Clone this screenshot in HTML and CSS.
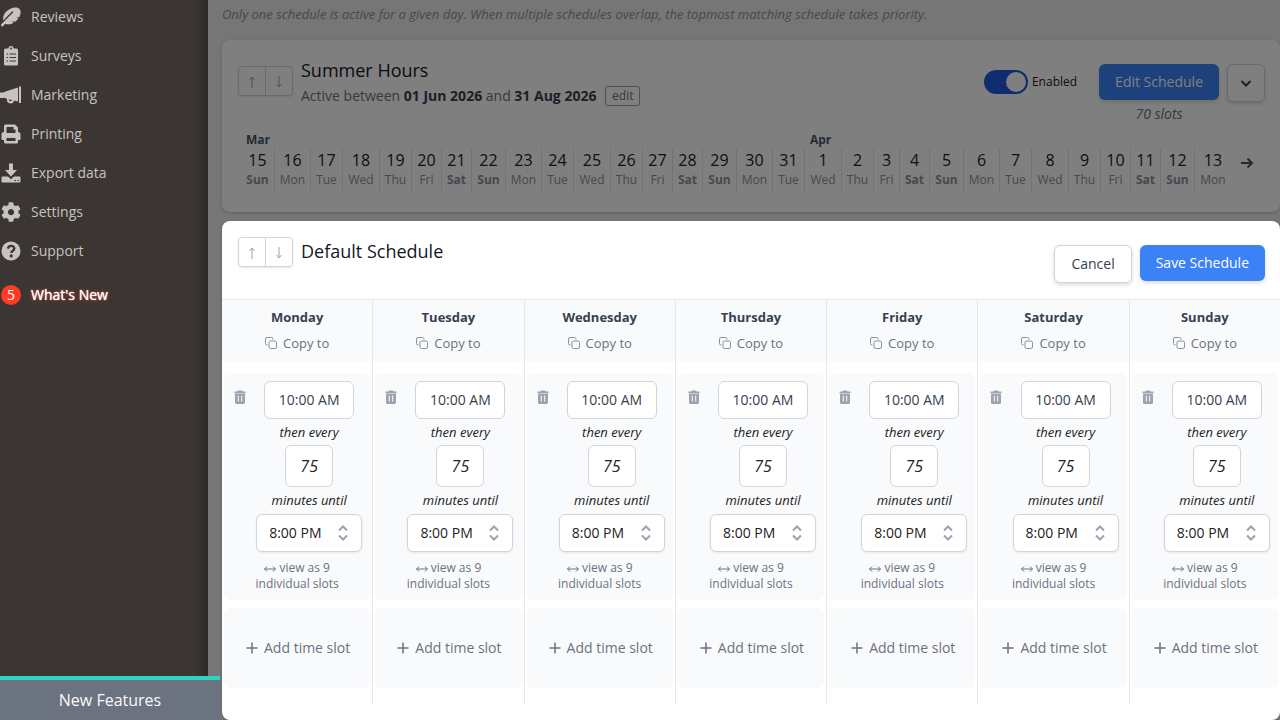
FILE: index.html
```html
<!DOCTYPE html>
<html lang="en">
<head>
  <meta charset="UTF-8" />
  <meta name="viewport" content="width=device-width, initial-scale=1.0"/>
  <title>Schedules</title>
  <link rel="stylesheet" href="styles.css">
</head>
<body>
  <aside class="sidebar">
    <nav class="menu">
      <a href="#">
        <svg viewBox="0 0 512 512"><path d="M467 44C425 2 363 8 311 19 235 35 150 93 101 156 61 208 48 277 55 345L283 117c8-8 18-8 25 0s7 17 0 24L14 436c-10 10-14 20-14 32 0 27 30 40 48 22l62-62c62 20 125 20 177-8l40-28-68-22h121c26-26 49-55 66-86l-74-22h96c12-28 22-57 28-84 12-52 13-92-29-134z"/></svg>
        <span>Reviews</span>
      </a>
      <a href="#">
        <svg viewBox="0 0 20 20"><path fill-rule="evenodd" d="M4.500 2.500h3a2.500 2.500 0 0 1 5 0h3A1.500 1.500 0 0 1 17 4v14a1.500 1.500 0 0 1-1.500 1.500h-11A1.500 1.500 0 0 1 3 18V4a1.500 1.500 0 0 1 1.500-1.500zM10 1.500a1 1 0 1 0 0 2 1 1 0 0 0 0-2zM5.500 7.500v1h1.500v-1zM8.500 7.500v1H15v-1zM5.500 11v1h1.500v-1zM8.500 11v1H15v-1zM5.500 14.500v1h1.500v-1zM8.500 14.500v1H15v-1z"/></svg>
        <span>Surveys</span>
      </a>
      <a href="#">
        <svg class="wide" viewBox="0 0 22 20"><path fill-rule="evenodd" d="M19 1.500h2V18h-2zM18 2.500v14l-4-1A3.400 3.400 0 0 1 7 14L4 12.500V13H0V7.500h4V7zM8.800 14.300a1.700 1.700 0 0 0 3.300.700z"/></svg>
        <span>Marketing</span>
      </a>
      <a href="#">
        <svg viewBox="0 0 20 20"><path fill-rule="evenodd" d="M3 8V2a1.500 1.500 0 0 1 1.500-1.500h9.500L17 3.500V8a2.500 2.500 0 0 1 2.500 2.500v4.500a1 1 0 0 1-1 1H17v2a1.500 1.500 0 0 1-1.500 1.500h-11A1.500 1.500 0 0 1 3 18v-2H1.500a1 1 0 0 1-1-1v-4.500A2.500 2.500 0 0 1 3 8zM5.500 3v6h9V5.500h-2V3zM5.500 14v3h9v-3z"/></svg>
        <span>Printing</span>
      </a>
      <a href="#">
        <svg viewBox="0 0 20 20"><path fill-rule="evenodd" d="M8 .500h4V7h4l-6 6.500L4 7h4zM1.500 13.500H7l3 2.700 3-2.700h5.500a1 1 0 0 1 1 1v4a1 1 0 0 1-1 1h-17a1 1 0 0 1-1-1v-4a1 1 0 0 1 1-1zM13.500 17v1H15v-1zM16.500 17v1H18v-1z"/></svg>
        <span>Export data</span>
      </a>
      <a href="#">
        <svg viewBox="0 0 512 512"><path d="M487.400 315.700l-42.600-24.600c4.300-23.200 4.300-47 0-70.200l42.600-24.600c4.900-2.800 7.100-8.600 5.500-14-11.100-35.600-30-67.800-54.700-94.600-3.800-4.100-10-5.100-14.800-2.300L380.800 110c-17.900-15.400-38.500-27.300-60.800-35.100V25.800c0-5.600-3.900-10.500-9.400-11.700-36.700-8.200-74.300-7.800-109.200 0-5.500 1.200-9.400 6.100-9.400 11.700V75c-22.200 7.900-42.800 19.800-60.800 35.100L88.700 85.500c-4.900-2.800-11-1.900-14.800 2.300-24.700 26.700-43.600 58.900-54.700 94.600-1.700 5.400.600 11.200 5.500 14L67.300 221c-4.300 23.200-4.300 47 0 70.200l-42.600 24.600c-4.900 2.800-7.100 8.600-5.500 14 11.100 35.600 30 67.800 54.700 94.600 3.800 4.100 10 5.100 14.800 2.300l42.600-24.600c17.900 15.400 38.500 27.300 60.800 35.100v49.200c0 5.600 3.900 10.500 9.400 11.700 36.700 8.200 74.300 7.800 109.200 0 5.500-1.200 9.400-6.100 9.400-11.700v-49.200c22.200-7.900 42.800-19.800 60.800-35.100l42.600 24.600c4.900 2.800 11 1.900 14.800-2.300 24.700-26.700 43.600-58.900 54.700-94.600 1.500-5.500-.700-11.300-5.600-14.100zM256 336c-44.100 0-80-35.900-80-80s35.900-80 80-80 80 35.900 80 80-35.900 80-80 80z"/></svg>
        <span>Settings</span>
      </a>
      <a href="#">
        <svg viewBox="0 0 20 20"><circle cx="10" cy="10" r="9.500"/><path class="mark" d="M6.800 7.600C7.300 5.800 8.500 4.900 10.200 4.900c1.800 0 3.100 1.100 3.100 2.600 0 2.300-3 2.100-3 4.400"/><circle class="dot" cx="10.200" cy="14.900" r="1.600"/></svg>
        <span>Support</span>
      </a>
      <a href="#" class="whats-new">
        <b class="count">5</b>
        <span>What's New</span>
      </a>
    </nav>
    <button class="new-features">New Features</button>
  </aside>

  <main>
    <p class="intro">Only one schedule is active for a given day. When multiple schedules overlap, the topmost matching schedule takes priority.</p>

    <section class="card summer">
      <header class="card-head">
        <div class="order">
          <button aria-label="Move up"><svg viewBox="0 0 6 12"><path d="M3 12V1M.500 4L3 1l2.500 3"/></svg></button>
          <button aria-label="Move down"><svg viewBox="0 0 6 12"><path d="M3 0v11M.500 8L3 11l2.500-3"/></svg></button>
        </div>
        <div class="heading">
          <h2>Summer Hours</h2>
          <p>Active between <b>01 Jun 2026</b> and <b>31 Aug 2026</b> <button class="edit">edit</button></p>
        </div>
        <label class="toggle"><input type="checkbox" checked> Enabled</label>
        <div class="edit-schedule">
          <button class="btn primary">Edit Schedule</button>
          <em>70 slots</em>
        </div>
        <button class="btn more" aria-label="More">
          <svg viewBox="0 0 12 12"><path d="M1.500 4L6 8.500 10.500 4"/></svg>
        </button>
      </header>
      <div class="calendar">
        <div class="months" id="months"></div>
        <button class="next" aria-label="Next days">
          <svg viewBox="0 0 14 12"><path d="M1 6h11M7.500 1.500L12 6l-4.500 4.500"/></svg>
        </button>
      </div>
    </section>

    <div class="backdrop"></div>

    <section class="card default">
      <header class="card-head">
        <div class="order">
          <button aria-label="Move up"><svg viewBox="0 0 6 12"><path d="M3 12V1M.500 4L3 1l2.500 3"/></svg></button>
          <button aria-label="Move down"><svg viewBox="0 0 6 12"><path d="M3 0v11M.500 8L3 11l2.500-3"/></svg></button>
        </div>
        <div class="heading">
          <h2>Default Schedule</h2>
        </div>
        <button class="btn">Cancel</button>
        <button class="btn primary">Save Schedule</button>
      </header>
      <div class="week" id="week"></div>
    </section>
  </main>

  <script>
    const weekdays = ["Sun", "Mon", "Tue", "Wed", "Thu", "Fri", "Sat"];
    const months = [
      { name: "Mar", first: 15, last: 31, weekday: 0 },
      { name: "Apr", first: 1, last: 13, weekday: 3 }
    ];

    months.forEach(month => {
      let days = "";
      for (let d = month.first; d <= month.last; d++) {
        const name = weekdays[(month.weekday + d - month.first) % 7];
        const short = d < 10 ? " short" : "";
        days += `<div class="date ${name.toLowerCase()}${short}">${d}<small>${name}</small></div>`;
      }
      document.getElementById("months").innerHTML += `<div class="month"><h4>${month.name}</h4><div class="dates">${days}</div></div>`;
    });

    const columns = ["Monday", "Tuesday", "Wednesday", "Thursday", "Friday", "Saturday", "Sunday"];

    document.getElementById("week").innerHTML = columns.map(day => `
      <div class="day">
        <div class="day-head">
          <h3>${day}</h3>
          <button class="copy">
            <svg viewBox="0 0 12 12"><rect x="4" y="4" width="7.500" height="7.500" rx="1.500"/><path d="M2.500 8H2A1.500 1.500 0 0 1 .500 6.500V2A1.500 1.500 0 0 1 2 .500h4.500A1.500 1.500 0 0 1 8 2v.500"/></svg>
            Copy to
          </button>
        </div>
        <div class="slot">
          <div class="slot-row">
            <button class="delete" aria-label="Delete">
              <svg viewBox="0 0 12 14"><path fill-rule="evenodd" d="M4 .500h4l.500 1H11.500V3.500H.500V1.500h3zM1 4h10v8.500a1.500 1.500 0 0 1-1.500 1.500h-7A1.500 1.500 0 0 1 1 12.500zM3.800 5.500v6h1v-6zM7.200 5.500v6h1v-6z"/></svg>
            </button>
            <div class="times">
              <input class="start" type="text" value="10:00 AM" aria-label="${day} start">
              <label for="every-${day}">then every</label>
              <input class="every" id="every-${day}" type="text" value="75">
              <label for="until-${day}">minutes until</label>
              <div class="until">
                <select id="until-${day}"><option>8:00 PM</option></select>
                <svg viewBox="0 0 10 16"><path d="M1 5.500l4-4 4 4M1 10.500l4 4 4-4"/></svg>
              </div>
            </div>
          </div>
          <button class="view-as"><svg viewBox="0 0 12 6"><path d="M.500 3h11M3 .500L.500 3 3 5.500M9 .500L11.500 3 9 5.500"/></svg> view as 9 individual slots</button>
        </div>
        <button class="add">
          <svg viewBox="0 0 12 12"><path d="M6 .500v11M.500 6h11"/></svg>
          Add time slot
        </button>
      </div>`).join("");
  </script>
</body>
</html>
```

FILE: styles.css
```css
* {
  box-sizing: border-box;
}

body {
  margin: 0;
  display: flex;
  min-height: 100vh;
  font-family: "Open Sans", sans-serif;
  font-size: 14px;
  line-height: 20px;
  color: #222;
  background: #ececec;
  overflow: hidden;
}

h2, h3, h4, p {
  margin: 0;
}

button, input, select {
  font: inherit;
  color: inherit;
  margin: 0;
  padding: 0;
  border: none;
  background: none;
}

button {
  cursor: pointer;
}

svg {
  display: block;
}

/* Sidebar */
.sidebar {
  position: relative;
  z-index: 1;
  flex: 0 0 208px;
  min-width: 0;
  display: flex;
  flex-direction: column;
  justify-content: space-between;
  background: linear-gradient(to left, #2d2926, #3b3633 14px);
}

.menu {
  display: flex;
  flex-direction: column;
  gap: 19px;
  padding-top: 7px;
}

.menu a {
  display: flex;
  align-items: center;
  gap: 10px;
  height: 20px;
  padding-left: 1px;
  color: #c8c3be;
  text-decoration: none;
}

.menu svg {
  width: 20px;
  height: 20px;
  fill: #c8c3be;
}

.menu .wide {
  width: 22px;
  margin: 0 -1px;
}

.menu .mark {
  fill: none;
  stroke: #3b3633;
  stroke-width: 2.4;
}

.menu .dot {
  fill: #3b3633;
}

.menu .whats-new {
  margin-top: 5px;
  color: #fff;
  text-shadow: 0 0 1px #fff, 0 0 4px #ff3b24;
  font-weight: 500;
}

.count {
  width: 20px;
  height: 20px;
  border-radius: 50%;
  background: #ff3b24;
  text-align: center;
  text-shadow: none;
  font-weight: 500;
}

.new-features {
  width: 220px;
  height: 44px;
  border-top: 4px solid #2dd4bf;
  background: #6b7280;
  color: #f9fafb;
  font-size: 16px;
}

/* Cards */
main {
  position: relative;
  flex: 1;
  min-width: 0;
  display: flex;
  flex-direction: column;
  padding: 4px 0 0 14px;
}

.intro {
  margin-bottom: 16px;
  font-size: 13px;
  font-style: italic;
  color: #8b919c;
}

.backdrop {
  position: absolute;
  inset: 0;
  background: rgba(0, 0, 0, 0.5);
}

.card {
  border-radius: 8px;
  background: #fff;
  box-shadow: 0 1px 3px rgba(0, 0, 0, 0.2);
}

.summer {
  margin-bottom: 9px;
  padding-bottom: 19px;
}

.default {
  position: relative;
  flex: 1;
  padding-bottom: 16px;
}

.card-head {
  display: flex;
  align-items: flex-start;
  gap: 8px;
  padding: 24px 15px 16px 16px;
}

.order {
  display: flex;
  margin-top: 2px;
  border: 1px solid #d1d5db;
  border-radius: 4px;
  box-shadow: 0 1px 2px rgba(0, 0, 0, 0.1);
}

.order button {
  width: 26px;
  height: 28px;
}

.order button + button {
  width: 27px;
  border-left: 1px solid #d1d5db;
}

.order svg {
  width: 6px;
  height: 12px;
  margin: 2px auto 0;
  fill: none;
  stroke: #9ca3af;
}

.default .order {
  margin-top: -8px;
}

.heading {
  flex: 1;
  margin-top: -8px;
  line-height: 24px;
  color: #6b7280;
}

.heading h2 {
  font-size: 18px;
  font-weight: 400;
  line-height: 28px;
  color: #111827;
}

.heading b {
  color: #374151;
}

.edit {
  height: 20px;
  margin-left: 5px;
  padding: 0 6px;
  border: 1px solid #9ca3af;
  border-radius: 2px;
  font-size: 12px;
  line-height: 16px;
  vertical-align: 1px;
}

.toggle {
  display: flex;
  align-items: center;
  gap: 4px;
  margin: 6px 14px 0 0;
  font-size: 12px;
  line-height: 24px;
}

.toggle input {
  appearance: none;
  display: flex;
  width: 44px;
  height: 24px;
  padding: 2px;
  border-radius: 12px;
  background: #2158e0;
}

.toggle input::before {
  content: "";
  width: 20px;
  height: 20px;
  margin-left: auto;
  border-radius: 50%;
  background: #fff;
}

.btn {
  flex: none;
  height: 38px;
  padding: 0 16px;
  border: 1px solid #d1d5db;
  border-radius: 6px;
  background: #fff;
  color: #374151;
  box-shadow: 0 2px 4px rgba(0, 0, 0, 0.15);
}

.btn.primary {
  height: 36px;
  border: none;
  background: #3b82f6;
  color: #fff;
  font-weight: 500;
}

.edit-schedule {
  display: flex;
  flex-direction: column;
  align-items: center;
  gap: 4px;
  height: 52px;
  color: #6b7280;
}

.more {
  padding: 0 12px;
}

.more svg {
  width: 12px;
  height: 12px;
  fill: none;
  stroke: #374151;
  stroke-width: 2;
}

/* Calendar strip */
.calendar {
  display: flex;
  align-items: center;
  justify-content: space-between;
  padding: 0 26px 0 19px;
}

.months, .dates {
  display: flex;
}

.month h4 {
  padding: 0 5px;
  font-size: 12px;
  line-height: 16px;
  color: #4b5563;
}

.date {
  flex: none;
  width: 32px;
  padding: 0 4px 5px;
  border-right: 1px solid #e5e7eb;
  font-size: 16px;
  line-height: 24px;
  text-align: center;
}

.date.sun {
  width: 34px;
}

.date.mon {
  width: 36px;
}

.date.wed {
  width: 37px;
}

.date.fri, .date.sat {
  width: 30px;
}

.date.fri.short {
  width: 26px;
}

.month:last-child .date:last-child {
  border-right: none;
}

.date small {
  display: block;
  font-size: 12px;
  line-height: 16px;
  color: #8b919c;
}

.sat small, .sun small {
  font-weight: 700;
}

.next svg {
  width: 14px;
  height: 12px;
  fill: none;
  stroke: #4b5563;
  stroke-width: 2;
}

/* Week editor */
.week {
  display: flex;
  border-top: 1px solid #e5e7eb;
}

.day {
  flex: 1 1 0;
  min-width: 0;
  padding-bottom: 16px;
  border-right: 1px solid #e5e7eb;
}

.day:last-child {
  border-right: none;
}

.day-head {
  display: flex;
  flex-direction: column;
  align-items: center;
  gap: 6px;
  margin-bottom: 12px;
  padding: 7px 0 8px;
  background: #f9fafb;
}

.day-head h3 {
  font-size: 13px;
  line-height: 20px;
  color: #374151;
}

.copy {
  display: flex;
  align-items: center;
  gap: 6px;
  font-size: 13px;
  color: #6b7280;
}

.copy svg {
  width: 12px;
  height: 12px;
  fill: none;
  stroke: #8b919c;
}

.slot {
  margin: 0 2px 8px;
  padding: 8px 0;
  border-radius: 6px;
  background: #f9fafb;
}

.slot-row {
  display: grid;
  grid-template-columns: 24px 1fr;
  align-items: start;
  margin-bottom: 8px;
}

.delete {
  padding: 9px 2px 0 10px;
}

.delete svg {
  width: 12px;
  height: 14px;
  fill: #9ca3af;
}

.times {
  display: flex;
  flex-direction: column;
  align-items: center;
}

.times label {
  font-size: 13px;
  font-style: italic;
  line-height: 26px;
}

.times input, .times select {
  height: 38px;
  border: 1px solid #d1d5db;
  border-radius: 6px;
  background: #fff;
}

.times .start {
  width: 90px;
  padding-bottom: 2px;
  color: #374151;
  text-align: center;
}

.times .every {
  width: 48px;
  height: 42px;
  font-size: 16px;
  font-style: italic;
  text-align: center;
}

.until {
  position: relative;
  margin-top: 1px;
}

.until select {
  appearance: none;
  display: block;
  width: 106px;
  padding-left: 12px;
  box-shadow: 0 1px 2px rgba(0, 0, 0, 0.08);
}

.until svg {
  position: absolute;
  top: 11px;
  right: 14px;
  width: 10px;
  height: 16px;
  fill: none;
  stroke: #9ca3af;
  stroke-width: 2;
  pointer-events: none;
}

.view-as {
  display: block;
  width: 100%;
  padding: 0 24px;
  font-size: 12px;
  line-height: 16px;
  color: #6b7280;
}

.view-as svg {
  display: inline-block;
  width: 12px;
  height: 6px;
  fill: none;
  stroke: #6b7280;
}

.add {
  display: flex;
  align-items: center;
  justify-content: center;
  gap: 6px;
  width: calc(100% - 4px);
  height: 80px;
  margin: 0 2px;
  padding-left: 2px;
  border-radius: 6px;
  background: #f9fafb;
  color: #6b7280;
}

.add svg {
  width: 12px;
  height: 12px;
  fill: none;
  stroke: #6b7280;
  stroke-width: 1.5;
}
```
